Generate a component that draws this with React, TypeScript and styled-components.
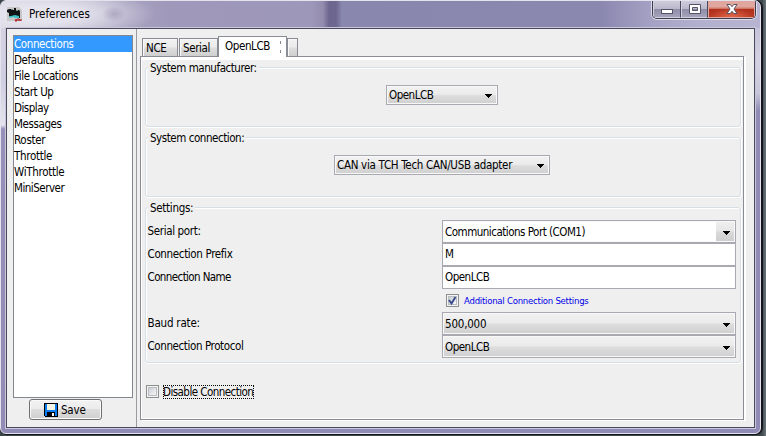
import React from "react";
import styled, { createGlobalStyle, css } from "styled-components";

const font = `11.5px/16px "DejaVu Sans Condensed", "DejaVu Sans", sans-serif`;

const GlobalStyle = createGlobalStyle`
  * { box-sizing: border-box; }
  html, body { margin: 0; padding: 0; overflow: hidden; background: #646d73; }
  body { font: ${font}; color: #000; }
  body, button, input, h1, h2 { font-stretch: condensed; }
`;

const Desktop = styled.div`
  width: 766px;
  height: 436px;
  padding-right: 3px;
  background: linear-gradient(90deg, #3e474c 762px, #6d777b 766px);
`;

const WindowFrame = styled.div`
  width: 763px;
  height: 435px;
  display: flex;
  flex-direction: column;
  border: solid #15151d;
  border-width: 0 2px 1px 0;
  border-radius: 6px 8px 8px 7px;
  background: #15151d;
`;

const Glass = styled.div`
  flex: 1;
  display: flex;
  flex-direction: column;
  border: 1px solid #e3e3ee;
  border-radius: 6px 7px 6px 6px;
  overflow: hidden;
  background:
    linear-gradient(180deg, #d5d3e2 0, #cfcde0 50px, #e4e3ee 97px, #9790b9 101px, #928bb6 100%) 0 27px / 6px 100% no-repeat,
    linear-gradient(180deg, #b9b6d2 0, #d3d1e1 60px, #c8c6da 92px, #8f8bb5 110px, #918cb7 100%);
`;

const TitleBar = styled.header`
  flex: 0 0 27px;
  display: flex;
  align-items: flex-start;
  padding-left: 6px;
  background:
    radial-gradient(ellipse 12px 8px at 113px 13px, rgba(120, 112, 148, 0.35), transparent),
    radial-gradient(ellipse 110px 26px at 45px 13px, rgba(231, 229, 238, 0.95) 30%, rgba(205, 202, 218, 0) 100%),
    linear-gradient(90deg, #d8d6e3 0, #c3c0d4 60px, #a8a2c0 125px, #9f98ba 170px, #9d97b9 310px,
      #938cae 322px, #6d678f 328px, #6d678f 335px, #8a87ae 341px, #8b88b0 600px, #a5a1c4 650px, #b3b0cf 700px, #b7b4d1 760px);
`;

const AppIcon = styled.svg`
  width: 16px;
  height: 16px;
  margin-top: 5px;
`;

const Title = styled.h1`
  flex: 1;
  margin: 5px 0 0 6px;
  font: ${font};
`;

const Controls = styled.div`
  width: 104px;
  height: 19px;
  margin: -1px 4px 0 0;
  display: flex;
  border: 1px solid #3f3c50;
  border-top: 0;
  border-radius: 0 0 5px 5px;
  box-shadow: 0 0 0 1px #dedce9;
  overflow: hidden;
`;

const ControlButton = styled.button<{ $w: number; $close?: boolean }>`
  width: ${(p) => p.$w}px;
  padding: 0;
  border: 1px solid ${(p) => (p.$close ? "#e1a69d" : "#d2d0df")};
  border-right: ${(p) => (p.$close ? "1px solid #e1a69d" : "1px solid #4b4860")};
  background: ${(p) =>
    p.$close
      ? "radial-gradient(ellipse 22px 9px at 50% 100%, #e0684a, transparent), linear-gradient(#dfa79e 0 35%, #ce7465 48%, #b0301b 50%, #b83825)"
      : "linear-gradient(#cfcddc 0, #b9b7ca 48%, #8f8ca8 50%, #a5a2bc)"};
  svg { display: block; margin: 0 auto; }
`;

const Client = styled.div`
  flex: 1;
  display: flex;
  margin: 0 5px 5px 5px;
  border: 1px solid #4b475d;
  outline: 1px solid #c9c7da;
  background: #efefef;
`;

const Sidebar = styled.aside`
  width: 130px;
  padding: 6px 0 0 6px;
  border-right: 1px solid #9a9aa0;
`;

const NavList = styled.ul`
  width: 120px;
  height: 363px;
  margin: 0;
  padding: 0;
  list-style: none;
  border: 1px solid #828790;
  background: #fff;
`;

const NavItem = styled.li<{ $selected?: boolean; $ls: number }>`
  height: 16px;
  line-height: 16px;
  letter-spacing: ${(p) => p.$ls}px;
  white-space: nowrap;
  ${(p) => p.$selected && css`background: #3399ff; color: #fff;`}
`;

const SaveButton = styled.button`
  width: 73px;
  height: 21px;
  margin: 1px 0 0 16px;
  padding: 0 0 0 14px;
  display: flex;
  align-items: center;
  gap: 3px;
  border: 1px solid #707070;
  border-radius: 3px;
  box-shadow: inset 0 0 0 1px #fafafa;
  background: linear-gradient(#f2f2f2 0, #ebebeb 48%, #dddddd 50%, #cfcfcf);
  font: ${font};
  letter-spacing: -0.2px;
  color: #000;
`;

const Main = styled.main`
  width: 610px;
  padding: 7px 0 0 3px;
`;

const TabStrip = styled.div`
  height: 20px;
  display: flex;
  align-items: flex-end;
  padding-left: 2px;
`;

const Tab = styled.div<{ $w: number; $active?: boolean; $gap?: number; $ls?: number }>`
  width: ${(p) => p.$w}px;
  height: ${(p) => (p.$active ? 21 : 18)}px;
  margin-right: ${(p) => p.$gap ?? 0}px;
  margin-bottom: ${(p) => (p.$active ? -1 : 0)}px;
  padding: ${(p) => (p.$active ? "1px 0 0 6px" : "1px 0 0 3px")};
  display: flex;
  justify-content: space-between;
  position: relative;
  z-index: ${(p) => (p.$active ? 1 : 0)};
  border: 1px solid #898c95;
  border-bottom: 0;
  box-shadow: ${(p) => (p.$active ? "none" : "inset 1px 1px #f8f8f8")};
  background: ${(p) => (p.$active ? "#fff" : "linear-gradient(#f2f2f2 0, #ebebeb 46%, #dddddd 54%, #cfcfcf)")};
  letter-spacing: ${(p) => p.$ls ?? 0}px;
  white-space: nowrap;
`;

const CloseMark = styled.i`
  width: 1px;
  height: 12px;
  margin: 3px 5px 0 0;
  background: repeating-linear-gradient(#8a8a8a 0 3px, #fff 3px 9px);
`;

const Panel = styled.section`
  width: 604px;
  height: 364px;
  padding: 6px 0 0 3px;
  border: 1px solid #898c95;
  box-shadow: 2px 1px 0 #fff, inset 0 3px #fff, inset 1px -1px #fff;
`;

const Group = styled.section<{ $h: number; $mb: number }>`
  width: 596px;
  height: ${(p) => p.$h}px;
  margin: 4px 0 ${(p) => p.$mb}px 1px;
  border: 1px solid #d5dfe5;
  border-radius: 3px;
  box-shadow: inset 1px 1px #fff, 0 1px #fff, 1px 0 #fff;
`;

const GroupTitle = styled.h2<{ $ls: number }>`
  width: max-content;
  height: 16px;
  margin: -8px 0 -1px 2px;
  padding: 0 2px;
  background: #efefef;
  font: ${font};
  letter-spacing: ${(p) => p.$ls}px;
`;

const Select = styled.button<{ $w: number; $h: number; $editable?: boolean; $ls: number }>`
  width: ${(p) => p.$w}px;
  height: ${(p) => p.$h}px;
  display: flex;
  align-items: center;
  justify-content: space-between;
  padding: 0 5px 0 2px;
  border: 1px solid #a9a9b1;
  box-shadow: inset 0 0 0 1px #f8f8f8;
  background: ${(p) =>
    p.$editable
      ? "linear-gradient(#fff, #fff) 0 0 / calc(100% - 19px) 100% no-repeat, linear-gradient(#f0f0f0, #e6e6e6 48%, #dadada 52%, #cdcdcd)"
      : "linear-gradient(#f2f2f2 0, #ebebeb 46%, #dddddd 54%, #cfcfcf)"};
  font: ${font};
  letter-spacing: ${(p) => p.$ls}px;
  color: #000;
  white-space: nowrap;
  svg { flex: none; margin-top: 2px; }
`;

const TopSelect = styled.div<{ $indent: number }>`
  padding: 10px 0 0 ${(p) => p.$indent}px;
`;

const Form = styled.div`
  display: grid;
  grid-template-columns: 295px 294px;
  grid-auto-rows: 23px;
  margin: 5px 0 0 1px;
`;

const Label = styled.label<{ $ls: number }>`
  padding-left: 0.5px;
  line-height: 22px;
  letter-spacing: ${(p) => p.$ls}px;
  white-space: nowrap;
`;

const TextField = styled.input<{ $ls?: number }>`
  width: 294px;
  height: 23px;
  padding: 0 0 1px 2px;
  border: 1px solid #a9a9b1;
  background: #fff;
  font: ${font};
  letter-spacing: ${(p) => p.$ls ?? 0}px;
  color: #000;
  outline: none;
`;

const CheckRow = styled.div<{ $link?: boolean }>`
  height: 23px;
  display: flex;
  align-items: center;
  gap: 4px;
  padding: ${(p) => (p.$link ? "0 0 0 4px" : "0 0 0 2px")};
`;

const CheckBox = styled.span`
  width: 13px;
  height: 13px;
  display: grid;
  place-items: center;
  border: 1px solid #8e8f8f;
  box-shadow: inset 0 0 0 1px #f4f4f4, inset 0 0 0 2px #b9bcc0;
  background: linear-gradient(135deg, #cbcfd5 20%, #f6f6f6 80%);
`;

const LinkText = styled.span`
  margin-left: 1px;
  color: #0000e8;
  font-size: 9.5px;
  letter-spacing: -0.24px;
  white-space: nowrap;
`;

const FocusText = styled.span`
  width: 91px;
  height: 14px;
  border: 1px dotted #000;
  line-height: 12px;
  text-indent: -1px;
  letter-spacing: -0.55px;
  white-space: nowrap;
`;

const DisableWrap = styled.div`
  margin-top: 17px;
`;

const Arrow = () => (
  <svg width="7" height="4" viewBox="0 0 7 4" shapeRendering="crispEdges">
    <path d="M0 0h7v1H6v1H5v1H4v1H3V3H2V2H1V1H0z" fill="#000" />
  </svg>
);

const Locomotive = () => (
  <AppIcon viewBox="0 0 16 16">
    <path d="M0 1h12l3 3v11H0z" fill="#c9c8c8" />
    <path d="M0 4l2-1h2l1 1h2V2h2v2h3l1 1v7h-2v-2l-3 1-2-1-1 1H2V7L0 6z" fill="#101314" />
    <path d="M2 10h2l4-1 4 1v2H8l-2-1-3 1z" fill="#41c2c9" />
    <path d="M4 3h2v1H4zM9 4h2v1H9z" fill="#7b8788" />
    <path d="M8 15l1-2 1 2zM10 15v-2h2v2M12 15v-2l2 2v-2" fill="none" stroke="#b3262c" />
  </AppIcon>
);

const Floppy = () => (
  <svg width="14" height="14" viewBox="0 0 14 14" shapeRendering="crispEdges">
    <path d="M0 0h14v14H1L0 13z" fill="#000" />
    <path d="M1 1h2v6h8V1h2v12h-2V9H3v4H1z" fill="#0a7cf0" />
    <path d="M3 1h8v6H3z" fill="#f4f6e6" />
    <path d="M3 9h8v4H3z" fill="#000" />
    <path d="M8 10h2v3H8z" fill="#fff" />
  </svg>
);

const navigation: [string, number][] = [
  ["Connections", -0.4], ["Defaults", -0.4], ["File Locations", -0.4], ["Start Up", -0.4],
  ["Display", -0.5], ["Messages", -0.4], ["Roster", -0.3], ["Throttle", -0.3],
  ["WiThrottle", -0.3], ["MiniServer", -0.5],
];

export default function App() {
  return (
    <Desktop>
      <GlobalStyle />
      <WindowFrame>
        <Glass>
          <TitleBar>
            <Locomotive />
            <Title>Preferences</Title>
            <Controls>
              <ControlButton $w={28} aria-label="Minimize">
                <svg width="14" height="16" viewBox="0 0 14 16"><rect x="1.5" y="8.5" width="11" height="4" fill="#fff" stroke="#555366" /></svg>
              </ControlButton>
              <ControlButton $w={27} aria-label="Maximize">
                <svg width="14" height="16" viewBox="0 0 14 16"><path d="M1.5 3.5h11v9h-11zM4.5 6.5h5v3h-5z" fill="#fff" fillRule="evenodd" stroke="#555366" /></svg>
              </ControlButton>
              <ControlButton $w={47} $close aria-label="Close">
                <svg width="14" height="16" viewBox="0 0 14 16"><path d="M2 3.5h3.3L7 5.7l1.7-2.2H12L9 8l3 4.5H8.7L7 10.3 5.3 12.5H2L5 8z" fill="#fff" stroke="#58525f" /></svg>
              </ControlButton>
            </Controls>
          </TitleBar>
          <Client>
            <Sidebar>
              <NavList>
                {navigation.map(([name, ls], i) => (
                  <NavItem key={name} $selected={i === 0} $ls={ls}>{name}</NavItem>
                ))}
              </NavList>
              <SaveButton><Floppy />Save</SaveButton>
            </Sidebar>
            <Main>
              <TabStrip>
                <Tab $w={36} $gap={1} $ls={-0.3}>NCE</Tab>
                <Tab $w={39} $ls={-0.4}>Serial</Tab>
                <Tab $w={69} $active $ls={-0.4}>OpenLCB<CloseMark /></Tab>
                <Tab $w={11} />
              </TabStrip>
              <Panel>
                <Group $h={60} $mb={10}>
                  <GroupTitle $ls={-0.45}>System manufacturer:</GroupTitle>
                  <TopSelect $indent={240}>
                    <Select $w={112} $h={20} $ls={-0.5}>OpenLCB<Arrow /></Select>
                  </TopSelect>
                </Group>
                <Group $h={60} $mb={10}>
                  <GroupTitle $ls={-0.45}>System connection:</GroupTitle>
                  <TopSelect $indent={188}>
                    <Select $w={216} $h={20} $ls={-0.3}>CAN via TCH Tech CAN/USB adapter<Arrow /></Select>
                  </TopSelect>
                </Group>
                <Group $h={156} $mb={0}>
                  <GroupTitle $ls={-0.3}>Settings:</GroupTitle>
                  <Form>
                    <Label $ls={-0.35}>Serial port:</Label>
                    <Select $w={294} $h={23} $editable $ls={-0.5}>Communications Port (COM1)<Arrow /></Select>
                    <Label $ls={-0.35}>Connection Prefix</Label>
                    <TextField defaultValue="M" />
                    <Label $ls={-0.6}>Connection Name</Label>
                    <TextField defaultValue="OpenLCB" $ls={-0.5} />
                    <span />
                    <CheckRow $link>
                      <CheckBox>
                        <svg width="9" height="9" viewBox="0 0 9 9"><path d="M1 4l2.5 3.5L7.5 1" fill="none" stroke="#37488c" strokeWidth="1.9" /></svg>
                      </CheckBox>
                      <LinkText>Additional Connection Settings</LinkText>
                    </CheckRow>
                    <Label $ls={-0.2}>Baud rate:</Label>
                    <Select $w={294} $h={23} $ls={-0.2}>500,000<Arrow /></Select>
                    <Label $ls={-0.4}>Connection Protocol</Label>
                    <Select $w={294} $h={23} $ls={-0.5}>OpenLCB<Arrow /></Select>
                  </Form>
                </Group>
                <DisableWrap>
                  <CheckRow>
                    <CheckBox />
                    <FocusText>Disable Connection</FocusText>
                  </CheckRow>
                </DisableWrap>
              </Panel>
            </Main>
          </Client>
        </Glass>
      </WindowFrame>
    </Desktop>
  );
}
